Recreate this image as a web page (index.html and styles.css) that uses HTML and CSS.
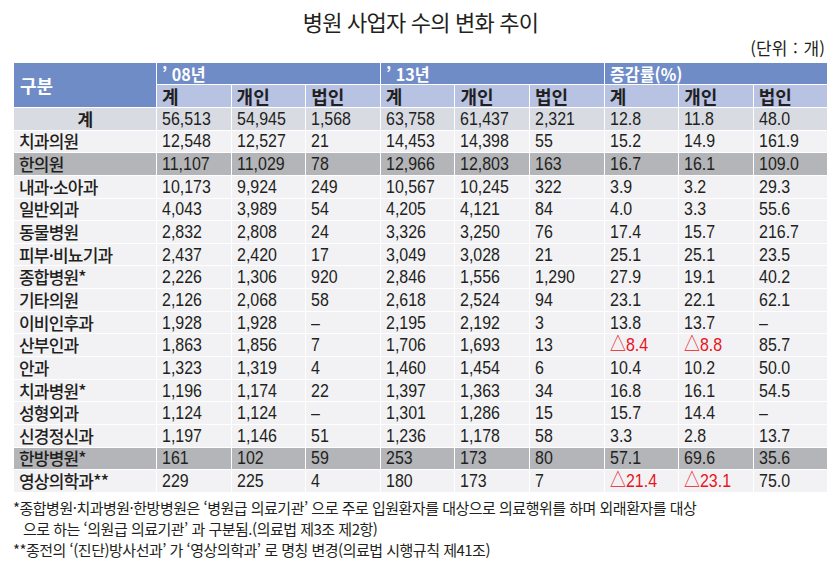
FILE: index.html
```html
<!DOCTYPE html>
<html lang="ko">
<head>
<meta charset="utf-8">
<title>병원 사업자 수의 변화 추이</title>
<link rel="stylesheet" href="styles.css">
</head>
<body>
<div class="page">
  <h1 class="title">병원 사업자 수의 변화 추이</h1>
  <div class="unit">(단위 : 개)</div>
  <table class="stats">
    <colgroup>
      <col class="c-name">
      <col class="c-num"><col class="c-num"><col class="c-num">
      <col class="c-num"><col class="c-num"><col class="c-num">
      <col class="c-num"><col class="c-num"><col class="c-num">
    </colgroup>
    <thead>
      <tr class="h1">
        <th rowspan="2" class="h-name">구분</th>
        <th colspan="3"><span class="v">’ 08년</span></th>
        <th colspan="3"><span class="v">’ 13년</span></th>
        <th colspan="3"><span class="v">증감률(%)</span></th>
      </tr>
      <tr class="h2">
        <th>계</th><th>개인</th><th>법인</th>
        <th>계</th><th>개인</th><th>법인</th>
        <th>계</th><th>개인</th><th>법인</th>
      </tr>
    </thead>
    <tbody>
      <tr class="r-total"><th class="total">계</th><td><span class="v">56,513</span></td><td><span class="v">54,945</span></td><td><span class="v">1,568</span></td><td><span class="v">63,758</span></td><td><span class="v">61,437</span></td><td><span class="v">2,321</span></td><td><span class="v">12.8</span></td><td><span class="v">11.8</span></td><td><span class="v">48.0</span></td></tr>
      <tr><th>치과의원</th><td><span class="v">12,548</span></td><td><span class="v">12,527</span></td><td><span class="v">21</span></td><td><span class="v">14,453</span></td><td><span class="v">14,398</span></td><td><span class="v">55</span></td><td><span class="v">15.2</span></td><td><span class="v">14.9</span></td><td><span class="v">161.9</span></td></tr>
      <tr class="r-dark"><th>한의원</th><td><span class="v">11,107</span></td><td><span class="v">11,029</span></td><td><span class="v">78</span></td><td><span class="v">12,966</span></td><td><span class="v">12,803</span></td><td><span class="v">163</span></td><td><span class="v">16.7</span></td><td><span class="v">16.1</span></td><td><span class="v">109.0</span></td></tr>
      <tr><th>내과·소아과</th><td><span class="v">10,173</span></td><td><span class="v">9,924</span></td><td><span class="v">249</span></td><td><span class="v">10,567</span></td><td><span class="v">10,245</span></td><td><span class="v">322</span></td><td><span class="v">3.9</span></td><td><span class="v">3.2</span></td><td><span class="v">29.3</span></td></tr>
      <tr><th>일반외과</th><td><span class="v">4,043</span></td><td><span class="v">3,989</span></td><td><span class="v">54</span></td><td><span class="v">4,205</span></td><td><span class="v">4,121</span></td><td><span class="v">84</span></td><td><span class="v">4.0</span></td><td><span class="v">3.3</span></td><td><span class="v">55.6</span></td></tr>
      <tr><th>동물병원</th><td><span class="v">2,832</span></td><td><span class="v">2,808</span></td><td><span class="v">24</span></td><td><span class="v">3,326</span></td><td><span class="v">3,250</span></td><td><span class="v">76</span></td><td><span class="v">17.4</span></td><td><span class="v">15.7</span></td><td><span class="v">216.7</span></td></tr>
      <tr><th>피부·비뇨기과</th><td><span class="v">2,437</span></td><td><span class="v">2,420</span></td><td><span class="v">17</span></td><td><span class="v">3,049</span></td><td><span class="v">3,028</span></td><td><span class="v">21</span></td><td><span class="v">25.1</span></td><td><span class="v">25.1</span></td><td><span class="v">23.5</span></td></tr>
      <tr><th>종합병원*</th><td><span class="v">2,226</span></td><td><span class="v">1,306</span></td><td><span class="v">920</span></td><td><span class="v">2,846</span></td><td><span class="v">1,556</span></td><td><span class="v">1,290</span></td><td><span class="v">27.9</span></td><td><span class="v">19.1</span></td><td><span class="v">40.2</span></td></tr>
      <tr><th>기타의원</th><td><span class="v">2,126</span></td><td><span class="v">2,068</span></td><td><span class="v">58</span></td><td><span class="v">2,618</span></td><td><span class="v">2,524</span></td><td><span class="v">94</span></td><td><span class="v">23.1</span></td><td><span class="v">22.1</span></td><td><span class="v">62.1</span></td></tr>
      <tr><th>이비인후과</th><td><span class="v">1,928</span></td><td><span class="v">1,928</span></td><td><span class="v">–</span></td><td><span class="v">2,195</span></td><td><span class="v">2,192</span></td><td><span class="v">3</span></td><td><span class="v">13.8</span></td><td><span class="v">13.7</span></td><td><span class="v">–</span></td></tr>
      <tr><th>산부인과</th><td><span class="v">1,863</span></td><td><span class="v">1,856</span></td><td><span class="v">7</span></td><td><span class="v">1,706</span></td><td><span class="v">1,693</span></td><td><span class="v">13</span></td><td class="neg"><span class="v">△8.4</span></td><td class="neg"><span class="v">△8.8</span></td><td><span class="v">85.7</span></td></tr>
      <tr><th>안과</th><td><span class="v">1,323</span></td><td><span class="v">1,319</span></td><td><span class="v">4</span></td><td><span class="v">1,460</span></td><td><span class="v">1,454</span></td><td><span class="v">6</span></td><td><span class="v">10.4</span></td><td><span class="v">10.2</span></td><td><span class="v">50.0</span></td></tr>
      <tr><th>치과병원*</th><td><span class="v">1,196</span></td><td><span class="v">1,174</span></td><td><span class="v">22</span></td><td><span class="v">1,397</span></td><td><span class="v">1,363</span></td><td><span class="v">34</span></td><td><span class="v">16.8</span></td><td><span class="v">16.1</span></td><td><span class="v">54.5</span></td></tr>
      <tr><th>성형외과</th><td><span class="v">1,124</span></td><td><span class="v">1,124</span></td><td><span class="v">–</span></td><td><span class="v">1,301</span></td><td><span class="v">1,286</span></td><td><span class="v">15</span></td><td><span class="v">15.7</span></td><td><span class="v">14.4</span></td><td><span class="v">–</span></td></tr>
      <tr><th>신경정신과</th><td><span class="v">1,197</span></td><td><span class="v">1,146</span></td><td><span class="v">51</span></td><td><span class="v">1,236</span></td><td><span class="v">1,178</span></td><td><span class="v">58</span></td><td><span class="v">3.3</span></td><td><span class="v">2.8</span></td><td><span class="v">13.7</span></td></tr>
      <tr class="r-dark"><th>한방병원*</th><td><span class="v">161</span></td><td><span class="v">102</span></td><td><span class="v">59</span></td><td><span class="v">253</span></td><td><span class="v">173</span></td><td><span class="v">80</span></td><td><span class="v">57.1</span></td><td><span class="v">69.6</span></td><td><span class="v">35.6</span></td></tr>
      <tr><th>영상의학과**</th><td><span class="v">229</span></td><td><span class="v">225</span></td><td><span class="v">4</span></td><td><span class="v">180</span></td><td><span class="v">173</span></td><td><span class="v">7</span></td><td class="neg"><span class="v">△21.4</span></td><td class="neg"><span class="v">△23.1</span></td><td><span class="v">75.0</span></td></tr>
    </tbody>
  </table>
  <div class="notes">
    <p>*종합병원·치과병원·한방병원은 ‘병원급 의료기관’ 으로 주로 입원환자를 대상으로 의료행위를 하며 외래환자를 대상</p>
    <p class="indent">으로 하는 ‘의원급 의료기관’ 과 구분됨.(의료법 제3조 제2항)</p>
    <p>**종전의 ‘(진단)방사선과’ 가 ‘영상의학과’ 로 명칭 변경(의료법 시행규칙 제41조)</p>
  </div>
</div>
</body>
</html>
```

FILE: styles.css
```css
html, body {
  margin: 0;
  padding: 0;
  background: #ffffff;
}

.page {
  width: 836px;
  height: 566px;
  padding: 0 8px 0 13px;
  box-sizing: border-box;
  font-family: "Noto Sans CJK KR", "Noto Sans", sans-serif;
  color: #231f20;
}

.title {
  margin: 0;
  padding-top: 6px;
  height: 32px;
  font-size: 22px;
  font-weight: 400;
  line-height: 30px;
  text-align: center;
  letter-spacing: -0.8px;
  color: #231f20;
}

.unit {
  height: 24px;
  font-size: 17px;
  line-height: 20px;
  text-align: right;
  padding-right: 3px;
  letter-spacing: 0;
  word-spacing: 1px;
}

.stats {
  width: 815px;
  table-layout: fixed;
  border-collapse: collapse;
  font-family: "Liberation Sans", "Noto Sans CJK KR", sans-serif;
}

.c-name { width: 143px; }
.c-num { width: 74.6px; }

.stats th,
.stats td {
  border: 1px solid #ffffff;
  padding: 0 0 0 5px;
  text-align: left;
  white-space: nowrap;
  overflow: visible;
}

.v {
  display: inline-block;
  transform: scaleX(0.84);
  transform-origin: 0 50%;
}

.stats thead th {
  font-family: "Noto Sans CJK KR", sans-serif;
  font-weight: 700;
}

.h1 th {
  background: #6f8cc7;
  color: #ffffff;
  height: 21px;
  font-size: 17px;
  line-height: 18px;
  vertical-align: middle;
}

.h1 th .v {
  transform: scaleX(0.95);
}

.h1 .h-name {
  font-size: 18px;
  padding-left: 6px;
}

.h2 th {
  background: #b8c2e2;
  color: #231f20;
  height: 22px;
  font-size: 18px;
  font-weight: 500;
  line-height: 20px;
}

.stats tbody tr {
  background: #f2f2f5;
  height: 22.65px;
}

.stats tbody tr.r-total { background: #d9dbe3; }
.stats tbody tr.r-dark { background: #b3b5b8; }

.stats tbody th {
  font-family: "Noto Sans CJK KR", sans-serif;
  font-size: 17px;
  font-weight: 500;
  letter-spacing: -0.8px;
  line-height: 20px;
  padding-left: 5px;
}

.stats tbody th.total {
  text-align: center;
  font-weight: 700;
  padding-left: 0;
}

.stats td {
  font-size: 19px;
  line-height: 20px;
  color: #231f20;
}

.stats td.neg {
  color: #e8141c;
}

.notes {
  padding-top: 4px;
  font-size: 15px;
  line-height: 21px;
  letter-spacing: -0.5px;
  color: #231f20;
}

.notes p {
  margin: 0;
}

.notes .indent {
  padding-left: 10px;
}
```
